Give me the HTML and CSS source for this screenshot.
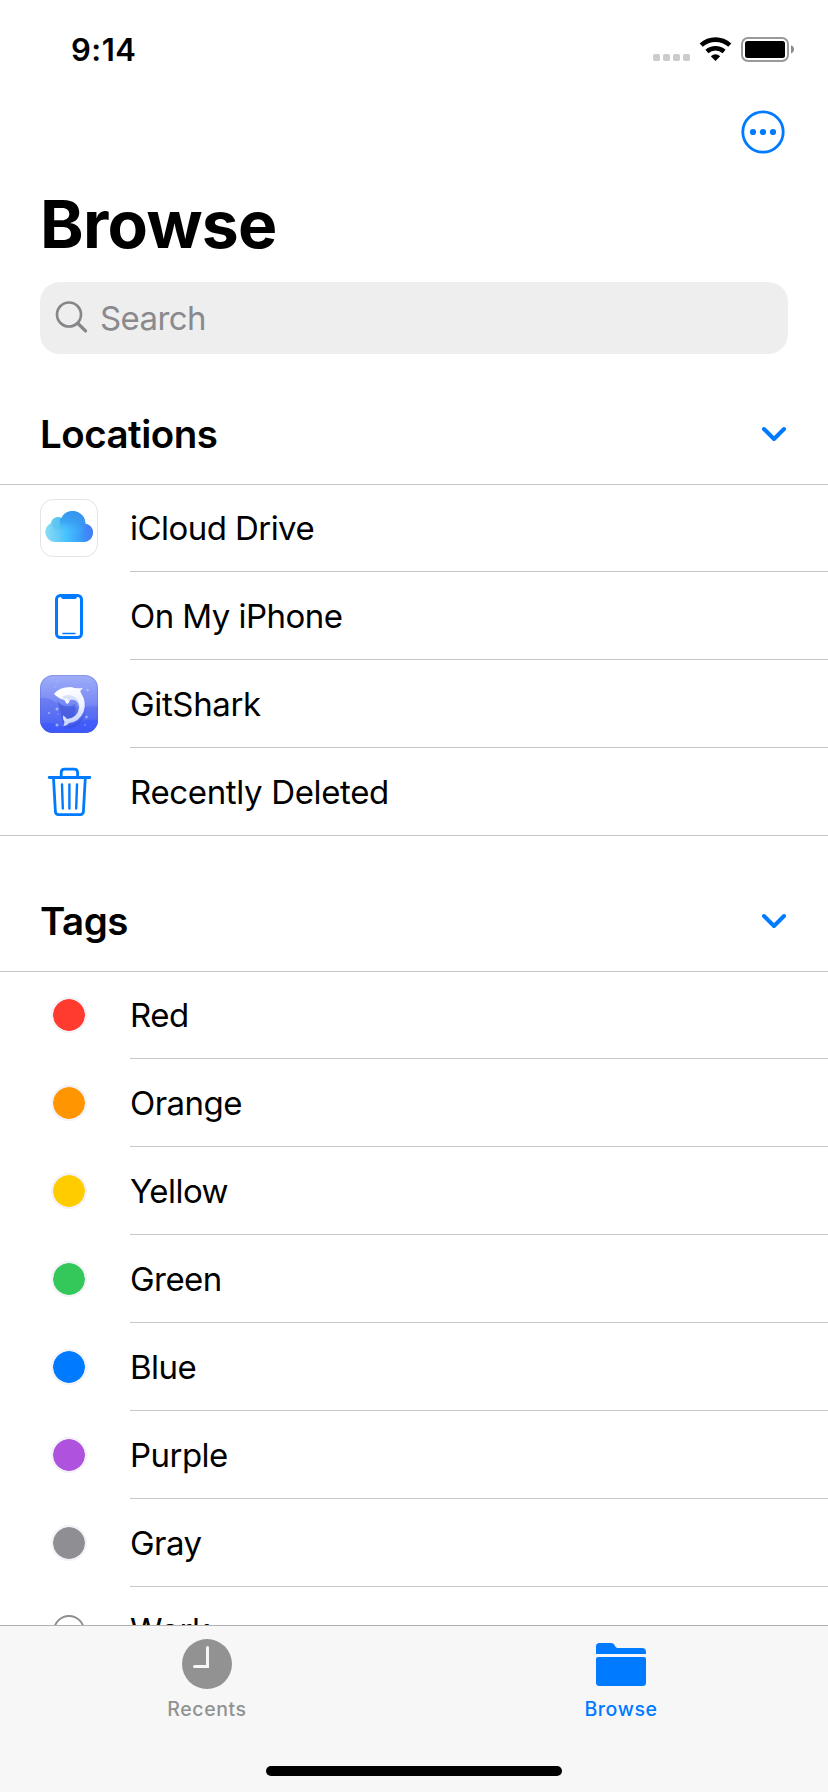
FILE: index.html
```
<!DOCTYPE html>
<html lang="en">
<head>
<meta charset="utf-8">
<title>Browse</title>
<link rel="stylesheet" href="styles.css">
</head>
<body>
<div class="screen">
  <header class="status">
    <span class="time">9:14</span>
    <svg class="status-icons" width="144" height="28" viewBox="0 0 144 28">
      <g fill="#ccc"><rect x="1" y="18" width="7" height="7" rx="1.8"/><rect x="11" y="18" width="7" height="7" rx="1.8"/><rect x="21" y="18" width="7" height="7" rx="1.8"/><rect x="31" y="18" width="7" height="7" rx="1.8"/></g>
      <g fill="none" stroke="#000" stroke-width="4.6"><path d="M49.2 9.1A21.5 21.5 0 0 1 77.8 9.1"/><path d="M54.9 15.4A13.3 13.3 0 0 1 72.1 15.4"/></g>
      <path d="M58.8 20.2Q63.5 16.2 68.2 20.2L63.5 25Z"/>
      <rect x="90" y="2" width="46" height="23" rx="6" fill="none" stroke="#999" stroke-width="2"/>
      <rect x="93" y="5" width="40" height="17" rx="2.5"/>
      <path d="M139 9.2Q142 10.3 142 13.3T139 17.4Z" fill="#8c8c8c"/>
    </svg>
  </header>
  <nav class="toolbar">
    <svg width="44" height="44" viewBox="0 0 44 44"><circle cx="22" cy="22" r="20.2" fill="none" stroke="#007aff" stroke-width="2.8"/><g fill="#007aff"><circle cx="12" cy="22" r="3.1"/><circle cx="22" cy="22" r="3.1"/><circle cx="32" cy="22" r="3.1"/></g></svg>
  </nav>
  <h1 class="title">Browse</h1>
  <div class="search">
    <svg width="33" height="33" viewBox="0 0 33 33" fill="none" stroke="#85858a"><circle cx="14" cy="13.5" r="12" stroke-width="2.6"/><path d="M22.7 22.2L30.500 29.900" stroke-width="3.4" stroke-linecap="round"/></svg>
    <span class="search-text">Search</span>
  </div>

  <section>
    <div class="section-head locations">
      <h2>Locations</h2>
      <svg class="chevron" width="26" height="16" viewBox="0 0 26 16"><path d="M3 3L13 13L23 3"/></svg>
    </div>
    <ul class="list">
      <li class="row">
        <svg class="icon" viewBox="0 0 58 58">
          <defs>
            <linearGradient id="cloud" x1="5" y1="32" x2="53" y2="30" gradientUnits="userSpaceOnUse"><stop offset="0" stop-color="#8bdcf7"/><stop offset=".25" stop-color="#68cdf6"/><stop offset=".45" stop-color="#46c1ff"/><stop offset=".75" stop-color="#3a9bf7"/><stop offset="1" stop-color="#4479f5"/></linearGradient>
            <linearGradient id="cloud-top" x1="34" y1="12" x2="30" y2="35" gradientUnits="userSpaceOnUse"><stop offset="0" stop-color="#3792ee"/><stop offset=".5" stop-color="#389cf2" stop-opacity=".8"/><stop offset="1" stop-color="#46c1ff" stop-opacity="0"/></linearGradient>
            <linearGradient id="cloud-end" x1="40" y1="38" x2="54" y2="31" gradientUnits="userSpaceOnUse"><stop offset="0" stop-color="#3c8efa" stop-opacity="0"/><stop offset="1" stop-color="#487af6"/></linearGradient>
            <clipPath id="cloud-shape"><path d="M15 43A10 10 0 0 1 11 24C11.5 20.5 14.5 18 18 18Q20 18 21.5 19C23.5 14.5 27.500 12 32.500 12C40 12 45.500 17.500 45.500 24.800C50 25.500 53 29 53 33.500C53 38.500 49 43 44 43Z"/></clipPath>
          </defs>
          <rect x=".5" y=".5" width="57" height="57" rx="12.500" fill="#fff" stroke="#e3e3e5"/>
          <g clip-path="url(#cloud-shape)">
            <rect x="4" y="10" width="50" height="34" fill="url(#cloud)"/>
            <circle cx="18" cy="24.500" r="6.500" fill="#4fbcec" opacity=".4"/>
            <circle cx="32.500" cy="25" r="13" fill="url(#cloud-top)"/>
            <circle cx="44" cy="33.800" r="9.300" fill="url(#cloud-end)"/>
          </g>
        </svg>
        <span class="label">iCloud Drive</span>
      </li>
      <li class="row">
        <svg class="icon" viewBox="0 0 58 58"><rect x="16.500" y="8.500" width="25" height="42" rx="4" fill="none" stroke="#007aff" stroke-width="3"/><path d="M21 8H37V9.500Q37 12 34.500 12H23.500Q21 12 21 9.500Z" fill="#007aff"/><path d="M23 46.500H35" stroke="#007aff" stroke-width="1.500" stroke-linecap="round"/></svg>
        <span class="label">On My iPhone</span>
      </li>
      <li class="row">
        <svg class="icon" viewBox="0 0 58 58">
          <defs>
            <linearGradient id="sea" x1="0" y1="0" x2="0" y2="1"><stop offset="0" stop-color="#a0aef9"/><stop offset=".45" stop-color="#7c8df5"/><stop offset="1" stop-color="#405afa"/></linearGradient>
            <linearGradient id="fish" x1="25" y1="12" x2="38" y2="50" gradientUnits="userSpaceOnUse"><stop offset="0" stop-color="#fff"/><stop offset=".6" stop-color="#eef2ff"/><stop offset="1" stop-color="#b6c8fb"/></linearGradient>
            <clipPath id="app"><rect width="58" height="58" rx="13"/></clipPath>
          </defs>
          <g clip-path="url(#app)">
            <rect width="58" height="58" fill="url(#sea)"/>
            <path d="M0 23Q8 22 15 27T31 32T58 31V58H0Z" fill="#4b60ed" opacity=".38"/>
            <path d="M0 49Q9 46 17 50T34 49T58 45V58H0Z" fill="#3653ff" opacity=".5"/>
            <path d="M17 25Q24 35 35 29Q38 42 26 51Q43 48 46 33Q44 53 25 54Z" fill="#3048c8" opacity=".4"/>
            <path d="M14 19Q19 12 31 12Q36 14 43 13Q39 16 41 18Q47 27 43.500 37Q39 47 29 48Q27 51 23.500 51L24.500 47Q22.500 44 23 40.500Q26 42 27 44Q37 43 39 34Q40 27 35 25Q31 24 30 25Q29 28 27.500 29Q25.500 28 24.500 25Q19 24 14 19Z" fill="url(#fish)"/>
            <path d="M22 22Q30 17 37 24Q42 32 37 40Q41 31 36 26Q31 23 29 26Q28 23 24 24Z" fill="#c6d6fb" opacity=".65"/>
            <g fill="#b5c5ff" opacity=".8"><circle cx="47.500" cy="15" r="1.300"/><circle cx="17" cy="34" r="1.500"/><circle cx="9" cy="38" r="1"/><circle cx="17" cy="50" r="1.500"/><circle cx="46.500" cy="42" r="1.300"/><circle cx="45" cy="50" r=".8"/><circle cx="17" cy="7" r=".7"/><circle cx="15" cy="12" r=".6"/><circle cx="18" cy="39" r=".6"/></g>
          </g>
          <rect x=".5" y=".5" width="57" height="57" rx="12.500" fill="none" stroke="#4d5fc2" opacity=".3"/>
        </svg>
        <span class="label loose">GitShark</span>
      </li>
      <li class="row last">
        <svg class="icon" viewBox="0 0 58 58" fill="none" stroke="#007aff" stroke-linecap="round" stroke-linejoin="round"><path d="M9.200 14.500H49.800" stroke-width="2.800"/><path d="M21.200 14V9.500Q21.200 6.200 24.500 6.200H34Q37.600 6.200 37.600 9.500V14" stroke-width="2.800"/><path d="M13.500 15L15.400 48.500Q15.600 51.600 18.500 51.600H40.300Q43.200 51.600 43.400 48.500L45.300 15" stroke-width="2.800"/><path d="M22 21.500L22.800 45.500M29.400 21.500V45.500M37 21.500L36.200 45.500" stroke-width="2.400"/></svg>
        <span class="label loose">Recently Deleted</span>
      </li>
    </ul>
  </section>

  <section>
    <div class="section-head tags">
      <h2>Tags</h2>
      <svg class="chevron" width="26" height="16" viewBox="0 0 26 16"><path d="M3 3L13 13L23 3"/></svg>
    </div>
    <ul class="list">
      <li class="row"><span class="dot red"></span><span class="label">Red</span></li>
      <li class="row"><span class="dot orange"></span><span class="label">Orange</span></li>
      <li class="row"><span class="dot yellow"></span><span class="label">Yellow</span></li>
      <li class="row"><span class="dot green"></span><span class="label">Green</span></li>
      <li class="row"><span class="dot blue"></span><span class="label">Blue</span></li>
      <li class="row"><span class="dot purple"></span><span class="label">Purple</span></li>
      <li class="row"><span class="dot gray"></span><span class="label">Gray</span></li>
      <li class="row"><span class="dot empty"></span><span class="label work">Work</span></li>
    </ul>
  </section>

  <footer class="tabbar">
    <div class="tabs">
      <div class="tab">
        <svg width="50" height="50" viewBox="0 0 50 50"><circle cx="25" cy="25" r="25" fill="#929292"/><path d="M25.500 8.500V27.500H12.500" fill="none" stroke="#f7f7f7" stroke-width="3" stroke-linecap="round"/></svg>
        <span class="tab-label">Recents</span>
      </div>
      <div class="tab active">
        <svg width="50" height="50" viewBox="0 0 50 50" fill="#007aff"><path d="M0 15V7.500Q0 4 3.500 4H15Q17.500 4 18.600 6.200Q20 9 21 9H46Q50 9 50 13V15Z"/><path d="M0 20Q0 18 2 18H48Q50 18 50 20V43.500Q50 47 46.500 47H3.500Q0 47 0 43.500Z"/></svg>
        <span class="tab-label">Browse</span>
      </div>
    </div>
    <div class="home-indicator"></div>
  </footer>
</div>
</body>
</html>
```
FILE: styles.css
```
* { box-sizing: border-box; margin: 0; padding: 0; }
body { background: #fff; color: #000; font-family: Inter, "Liberation Sans", sans-serif; }
svg { display: block; flex: none; }
.screen { position: relative; width: 828px; height: 1792px; overflow: hidden; background: #fff; }

.status { height: 100px; display: flex; justify-content: space-between; align-items: flex-start; padding: 31px 32px 0 71px; }
.time { font-size: 31px; line-height: 38px; font-weight: 600; letter-spacing: 0.5px; }
.status-icons { margin-top: 5px; }
.toolbar { height: 88px; display: flex; justify-content: flex-end; padding: 10px 43px 0 0; }
.title { height: 94px; padding-left: 40px; font-size: 66px; line-height: 72px; font-weight: 700; letter-spacing: -0.7px; }
.search { height: 72px; margin: 0 40px; padding-left: 15px; border-radius: 20px; background: #eee; color: #8a8a8e; display: flex; align-items: center; gap: 12px; }
.search svg { margin-bottom: 1px; }
.search-text { font-size: 33px; line-height: 40px; letter-spacing: -0.6px; }

.section-head { display: flex; align-items: center; justify-content: space-between; padding: 0 41px 0 40px; }
.section-head.locations { height: 130px; padding-top: 30px; }
.section-head.tags { height: 135px; padding-top: 35px; }
.section-head h2 { font-size: 38.5px; line-height: 48px; font-weight: 600; letter-spacing: -0.5px; }
.chevron path { fill: none; stroke: #007aff; stroke-width: 4; stroke-linecap: round; stroke-linejoin: round; }

.list { list-style: none; border-top: 1px solid #c6c6c8; }
.row { height: 88px; padding-left: 40px; display: flex; align-items: stretch; gap: 32px; }
.row:first-child { height: 87px; }
.icon { width: 58px; height: 58px; align-self: center; }
.label { flex: 1; display: flex; align-items: center; font-size: 33px; line-height: 40px; letter-spacing: -0.55px; border-bottom: 1px solid #c6c6c8; }
.label.loose { letter-spacing: -0.35px; }
.label.work { padding-bottom: 2px; }
.row.last { border-bottom: 1px solid #c6c6c8; }
.row.last .label { border-bottom: 0; }
.dot { flex: none; align-self: center; width: 36px; height: 36px; margin: 0 11px; border: 2px solid #f2f2f7; border-radius: 50%; }
.row:first-child .icon, .row:first-child .dot { margin-bottom: 1px; }
.red { background: #ff3b30; background-clip: padding-box; }
.orange { background: #ff9500; background-clip: padding-box; }
.yellow { background: #ffcc00; background-clip: padding-box; }
.green { background: #34c759; background-clip: padding-box; }
.blue { background: #007aff; background-clip: padding-box; }
.purple { background: #af52de; background-clip: padding-box; }
.gray { background: #8e8e93; background-clip: padding-box; }
.empty { width: 32px; height: 32px; margin: 0 13px; border-color: #8e8e93; }

.tabbar { position: absolute; left: 0; right: 0; bottom: 0; height: 167px; background: #f7f7f7; border-top: 1px solid #b2b2b2; display: flex; flex-direction: column; align-items: center; justify-content: space-between; padding: 13px 0 16px; }
.tabs { width: 100%; display: grid; grid-template-columns: 1fr 1fr; }
.tab { display: flex; flex-direction: column; align-items: center; gap: 8px; color: #929292; }
.tab.active { color: #007aff; }
.tab-label { font-size: 19.5px; line-height: 24px; font-weight: 500; letter-spacing: 0.6px; }
.home-indicator { width: 296px; height: 10px; border-radius: 5px; background: #000; }
```
